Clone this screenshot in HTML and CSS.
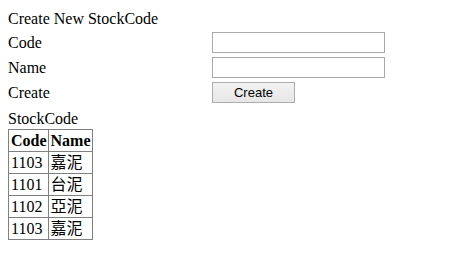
FILE: index.html
```html
<!DOCTYPE html>
<html>
<head>
<meta charset="utf-8">
<link rel="stylesheet" href="styles.css">
</head>
<body>
<div class="title">Create New StockCode</div>
<div class="form">
  <div class="label">Code</div>
  <div class="field"><input class="text" type="text"></div>
  <div class="label">Name</div>
  <div class="field"><input class="text" type="text"></div>
  <div class="label">Create</div>
  <div class="field"><button class="btn" type="button">Create</button></div>
</div>
<div class="caption">StockCode</div>
<table class="list">
  <tr><th>Code</th><th>Name</th></tr>
  <tr><td>1103</td><td>嘉泥</td></tr>
  <tr><td>1101</td><td>台泥</td></tr>
  <tr><td>1102</td><td>亞泥</td></tr>
  <tr><td>1103</td><td>嘉泥</td></tr>
</table>
</body>
</html>
```
FILE: styles.css
```css
body {
  margin: 8px;
  font-family: "Liberation Serif", "Noto Sans CJK TC", serif;
  font-size: 16px;
  color: #000;
  background: #fff;
}
.title {
  padding-top: 2px;
  height: 20px;
}
.form {
  display: grid;
  grid-template-columns: 204px 174px;
  grid-auto-rows: 25px;
  align-items: center;
}
.field {
  display: flex;
  align-items: center;
}
.text {
  box-sizing: border-box;
  width: 173px;
  height: 21px;
  margin: 0;
  padding: 1px 2px;
  border: 1px solid #a9a9a9;
  background: #fff;
  font-family: "Liberation Sans", sans-serif;
  font-size: 13px;
}
.btn {
  box-sizing: border-box;
  width: 83px;
  height: 21px;
  margin: 0;
  padding: 0;
  border: 1px solid #adadad;
  border-radius: 0;
  background: linear-gradient(#f2f2f2, #e6e6e6);
  font-family: "Liberation Sans", sans-serif;
  font-size: 13px;
  color: #000;
}
.caption {
  margin-top: 5px;
  height: 19px;
}
.list {
  border-collapse: collapse;
  border: 1px solid #808080;
  line-height: 19px;
}
.list th, .list td {
  border: 1px solid #808080;
  padding: 1px 1px 1px 2px;
  height: 19px;
  text-align: left;
  font-weight: normal;
  white-space: nowrap;
}
.list th {
  font-weight: bold;
}
```
